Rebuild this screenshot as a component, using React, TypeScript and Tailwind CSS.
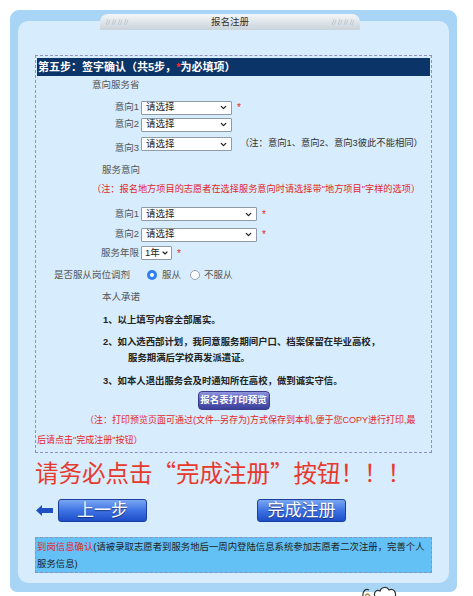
import { ChevronDown } from "lucide-react";

const FONT = { fontFamily: '"Liberation Sans", "Noto Sans CJK SC", sans-serif' } as const;
const CJK = { fontFamily: '"Noto Sans CJK SC", sans-serif' } as const;

function Select({ width }: { width: string }) {
  return (
    <div
      className={`${width} h-[14px] flex items-center justify-between bg-white border border-[#8e9aa6] rounded-[1px] pl-[4px] pr-[3px] text-[9.5px] text-[#222]`}
    >
      <span>请选择</span>
      <ChevronDown size={9} strokeWidth={3.5} color="#222" />
    </div>
  );
}

function Star() {
  return <span className="text-[#e3262b] text-[10px] ml-[5px]">*</span>;
}

function Hatch() {
  return (
    <svg width="26" height="8" viewBox="0 0 26 8">
      {[0, 6, 12, 18].map((x) => (
        <path key={x} d={`M${x + 2} 7 L${x + 4} 1 M${x + 4} 7 L${x + 6} 2`} stroke="#b9c3ca" strokeWidth="0.8" />
      ))}
    </svg>
  );
}

export default function App() {
  return (
    <div className="min-h-screen bg-white pt-[10px] px-[10px] relative" style={FONT}>
      {/* blue frame */}
      <div className="w-[447px] h-[582px] bg-[#a8d5f6] rounded-t-[9px] rounded-b-[7px] pt-[4px] flex flex-col">
        {/* title tab */}
        <div className="relative z-10 ml-[90px] w-[260px] h-[16px] rounded-t-[8px] bg-gradient-to-b from-[#f4f7f9] to-[#c9d3da] flex items-center justify-between px-[4px]">
          <Hatch />
          <span className="text-[9.5px] text-[#333]">报名注册</span>
          <Hatch />
        </div>
        {/* inner panel */}
        <div className="mx-[8px] -mt-[9px] h-[562px] bg-[#d7ecfc] rounded-[10px] pt-[34px] px-[17px]">
          {/* dashed box */}
          <div className="w-[397px] border border-dashed border-[#8d93b8] flex flex-col pb-[2px]">
            <div className="mx-[1px] mt-[2px] h-[18px] bg-[#0b3468] flex items-center pl-[1px] text-[11px] font-bold text-white">
              第五步：签字确认（共5步，<span className="text-[#ff2a2a]">*</span>为必填项）
            </div>
            <div className="h-[18px] flex items-center pl-[56px] text-[9.5px] text-[#555]">意向服务省</div>

            <div className="mt-[5px] h-[17px] flex items-center text-[9.5px] text-[#555]">
              <span className="w-[105px] text-right pr-[2px]">意向1</span>
              <Select width="w-[91px]" />
              <Star />
            </div>
            <div className="h-[17px] flex items-center text-[9.5px] text-[#555]">
              <span className="w-[105px] text-right pr-[2px]">意向2</span>
              <Select width="w-[91px]" />
            </div>
            <div className="h-[22px] flex items-start text-[9.5px] text-[#555]">
              <span className="w-[105px] text-right pr-[2px] self-end leading-[12px] pb-[1px]">意向3</span>
              <div className="mt-[4px] flex items-center">
                <Select width="w-[91px]" />
                <span className="ml-[8px] text-[9.3px] text-[#333]">（注：意向1、意向2、意向3彼此不能相同）</span>
              </div>
            </div>

            <div className="mt-[7px] h-[16px] flex items-center pl-[66px] text-[9.5px] text-[#555]">服务意向</div>
            <div className="mt-[4px] h-[16px] flex items-center pl-[56px] text-[9.2px] text-[#e3262b]">
              （注：报名地方项目的志愿者在选择服务意向时请选择带"地方项目"字样的选项）
            </div>

            <div className="mt-[6px] h-[20px] flex items-center text-[9.5px] text-[#555]">
              <span className="w-[105px] text-right pr-[2px]">意向1</span>
              <Select width="w-[116px]" />
              <Star />
            </div>
            <div className="h-[21px] flex items-center text-[9.5px] text-[#555]">
              <span className="w-[105px] text-right pr-[2px]">意向2</span>
              <Select width="w-[116px]" />
              <Star />
            </div>
            <div className="h-[16px] flex items-center text-[9.5px] text-[#555]">
              <span className="w-[105px] text-right pr-[2px]">服务年限</span>
              <div className="w-[31px] h-[14px] flex items-center justify-between bg-white border border-[#8e9aa6] rounded-[1px] pl-[3px] pr-[2px] text-[9.5px] text-[#222]">
                <span>1年</span>
                <ChevronDown size={8} strokeWidth={3.5} color="#222" />
              </div>
              <Star />
            </div>

            <div className="mt-[5px] h-[18px] flex items-center text-[9.5px] text-[#555]">
              <span className="w-[94px] text-right">是否服从岗位调剂</span>
              <span className="ml-[17px] w-[10px] h-[10px] rounded-full bg-[#2f7ff0] flex items-center justify-center">
                <span className="w-[4px] h-[4px] rounded-full bg-white" />
              </span>
              <span className="ml-[5px]">服从</span>
              <span className="ml-[9px] w-[10px] h-[10px] rounded-full bg-white border border-[#9aa3ad]" />
              <span className="ml-[4px]">不服从</span>
            </div>

            <div className="mt-[4px] h-[18px] flex items-center pl-[66px] text-[9.5px] text-[#555]">本人承诺</div>
            <div className="mt-[5px] h-[18px] flex items-center pl-[67px] text-[9.4px] font-bold text-[#222]">
              1、以上填写内容全部属实。
            </div>
            <div className="mt-[4px] h-[18px] flex items-center pl-[67px] text-[9.4px] font-bold text-[#222]">
              2、如入选西部计划，我同意服务期间户口、档案保留在毕业高校，
            </div>
            <div className="h-[14px] flex items-center pl-[92px] text-[9.4px] font-bold text-[#222]">
              服务期满后学校再发派遣证。
            </div>
            <div className="mt-[7px] h-[18px] flex items-center pl-[67px] text-[9.4px] font-bold text-[#222]">
              3、如本人退出服务会及时通知所在高校，做到诚实守信。
            </div>
            <div className="h-[20px] flex items-end justify-center">
              <div className="w-[72px] h-[19px] rounded-[4px] border border-[#3b3d8c] bg-gradient-to-b from-[#8f94dc] via-[#5a5fb8] to-[#3b3f9a] flex items-center justify-center text-[9.5px] font-bold text-white">
                报名表打印预览
              </div>
            </div>
            <div className="leading-[20px] text-[9px] text-[#e3262b] pl-[1px]">
              <div className="pl-[48px]">（注：打印预览页面可通过(文件--另存为)方式保存到本机,便于您COPY进行打印,最</div>
              <div>后请点击"完成注册"按钮）</div>
            </div>
          </div>

          {/* big red notice */}
          <div className="mt-[5px] h-[30px] flex items-center text-[23.5px] leading-none text-[#e8392d]" style={CJK}>
            请务必点击“完成注册”按钮！！！
          </div>

          {/* nav buttons */}
          <div className="mt-[10px] h-[24px] flex items-center">
            <svg width="17" height="11" viewBox="0 0 17 11" className="ml-[1px]">
              <path d="M0 5.5 L6 0 L6 3 L17 3 L17 8 L6 8 L6 11 Z" fill="#1f4fc2" />
            </svg>
            <div className="ml-[5px] w-[89px] h-[23px] rounded-[3px] border border-[#1b3f9e] bg-gradient-to-b from-[#7aa6f2] via-[#3f72e4] to-[#1d4dc9] flex items-center justify-center text-[17px] leading-none text-white [text-shadow:0_1px_1px_rgba(0,0,40,0.5)]">
              上一步
            </div>
            <div className="ml-[110px] w-[89px] h-[23px] rounded-[3px] border border-[#1b3f9e] bg-gradient-to-b from-[#7aa6f2] via-[#3f72e4] to-[#1d4dc9] flex items-center justify-center text-[17px] leading-none text-white [text-shadow:0_1px_1px_rgba(0,0,40,0.5)]">
              完成注册
            </div>
          </div>

          {/* bottom info box */}
          <div className="mt-[15px] w-[397px] h-[36px] border border-dashed border-[#8d93b8] bg-[#63c1f6] px-[1px] flex flex-col justify-center text-[9.4px] leading-[17px] text-[#222]">
            <div>
              <span className="text-[#e3262b]">到岗信息确认</span>(请被录取志愿者到服务地后一周内登陆信息系统参加志愿者二次注册，完善个人
            </div>
            <div>服务信息)</div>
          </div>
        </div>
      </div>

      {/* cartoon peeking at the bottom */}
      <svg className="absolute left-[360px] top-[583px]" width="40" height="14" viewBox="0 0 40 14">
        <path d="M3 14 C2 8 6 5 9 7" stroke="#333" strokeWidth="1.2" fill="none" />
        <path d="M5 14 C6 10 9 10 10 14" stroke="#b9822f" strokeWidth="1.5" fill="none" />
        <path d="M15 14 C13 9 17 6 20 8 C21 4 27 3 29 7 C33 5 37 9 35 14" stroke="#333" strokeWidth="1.2" fill="#fff" />
      </svg>
    </div>
  );
}
